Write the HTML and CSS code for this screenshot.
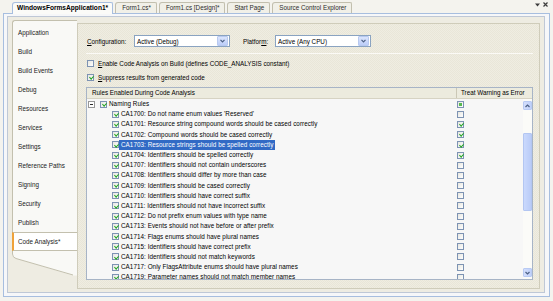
FILE: index.html
```html
<!DOCTYPE html>
<html lang="en">
<head>
    <meta charset="UTF-8">
    <title>WindowsFormsApplication1 - Code Analysis</title>
    <link rel="stylesheet" href="styles.css">
</head>
<body>
    <div class="tabstrip">
        <div class="tab active">WindowsFormsApplication1*</div>
        <div class="tab">Form1.cs*</div>
        <div class="tab">Form1.cs [Design]*</div>
        <div class="tab">Start Page</div>
        <div class="tab">Source Control Explorer</div>
        <div class="tab-tools">
            <svg width="5" height="4" viewBox="0 0 5 4"><path d="M0 0.5H5L2.5 3.5Z" fill="#3c3c3c"/></svg>
            <svg width="5" height="5" viewBox="0 0 5 5"><path d="M0.5 0.5L4.5 4.5M4.5 0.5L0.5 4.5" stroke="#3c3c3c" stroke-width="1.2"/></svg>
        </div>
    </div>

    <div class="doc">
        <div class="doc-inner">
            <div class="nav">
                <div class="nav-list">
                    <div class="nav-item">Application</div>
                    <div class="nav-item">Build</div>
                    <div class="nav-item">Build Events</div>
                    <div class="nav-item">Debug</div>
                    <div class="nav-item">Resources</div>
                    <div class="nav-item">Services</div>
                    <div class="nav-item">Settings</div>
                    <div class="nav-item">Reference Paths</div>
                    <div class="nav-item">Signing</div>
                    <div class="nav-item">Security</div>
                    <div class="nav-item">Publish</div>
                    <div class="nav-item selected">Code Analysis*</div>
                </div>
                <svg class="nav-tail" width="65" height="25" viewBox="0 0 65 25">
                    <path d="M0 0V3Q0 6.5 4 7.5L61 24.5H65V0Z" fill="#f9f9f6"/>
                    <path d="M0.5 0V3Q0.5 6.5 4 7.5L61 24" fill="none" stroke="#c3c0ae"/>
                </svg>
            </div>

            <div class="page">
                <div class="config-row">
                    <span class="label label-config"><u>C</u>onfiguration:</span>
                    <div class="combo">
                        <span class="combo-text">Active (Debug)</span>
                        <span class="combo-btn"><svg width="5" height="4" viewBox="0 0 5 4"><path d="M0.5 0.8L2.5 2.8L4.5 0.8" fill="none" stroke="#4d6185" stroke-width="1.2"/></svg></span>
                    </div>
                    <span class="label label-platform">Platfor<u>m</u>:</span>
                    <div class="combo">
                        <span class="combo-text">Active (Any CPU)</span>
                        <span class="combo-btn"><svg width="5" height="4" viewBox="0 0 5 4"><path d="M0.5 0.8L2.5 2.8L4.5 0.8" fill="none" stroke="#4d6185" stroke-width="1.2"/></svg></span>
                    </div>
                </div>

                <div class="separator"></div>

                <div class="option">
                    <i class="cb"></i>
                    <span><u>E</u>nable Code Analysis on Build (defines CODE_ANALYSIS constant)</span>
                </div>
                <div class="option">
                    <i class="cb on"></i>
                    <span><u>S</u>uppress results from generated code</span>
                </div>

                <div class="rules">
                    <div class="rules-head">
                        <div class="head-name">Rules Enabled During Code Analysis</div>
                        <div class="head-warn">Treat Warning as Error</div>
                    </div>
                    <div class="rules-body">
                        <div class="rows">
                            <div class="row group">
                                <div class="name"><i class="expander"></i><i class="cb on"></i><span class="txt">Naming Rules</span></div>
                                <div class="warn"><i class="cb mixed"></i></div>
                            </div>
                            <div class="row">
                                <div class="name"><i class="cb on"></i><span class="txt">CA1700: Do not name enum values 'Reserved'</span></div>
                                <div class="warn"><i class="cb"></i></div>
                            </div>
                            <div class="row">
                                <div class="name"><i class="cb on"></i><span class="txt">CA1701: Resource string compound words should be cased correctly</span></div>
                                <div class="warn"><i class="cb on"></i></div>
                            </div>
                            <div class="row">
                                <div class="name"><i class="cb on"></i><span class="txt">CA1702: Compound words should be cased correctly</span></div>
                                <div class="warn"><i class="cb on"></i></div>
                            </div>
                            <div class="row">
                                <div class="name"><i class="cb on"></i><span class="txt selected">CA1703: Resource strings should be spelled correctly</span></div>
                                <div class="warn"><i class="cb on"></i></div>
                            </div>
                            <div class="row">
                                <div class="name"><i class="cb on"></i><span class="txt">CA1704: Identifiers should be spelled correctly</span></div>
                                <div class="warn"><i class="cb on"></i></div>
                            </div>
                            <div class="row">
                                <div class="name"><i class="cb on"></i><span class="txt">CA1707: Identifiers should not contain underscores</span></div>
                                <div class="warn"><i class="cb"></i></div>
                            </div>
                            <div class="row">
                                <div class="name"><i class="cb on"></i><span class="txt">CA1708: Identifiers should differ by more than case</span></div>
                                <div class="warn"><i class="cb"></i></div>
                            </div>
                            <div class="row">
                                <div class="name"><i class="cb on"></i><span class="txt">CA1709: Identifiers should be cased correctly</span></div>
                                <div class="warn"><i class="cb"></i></div>
                            </div>
                            <div class="row">
                                <div class="name"><i class="cb on"></i><span class="txt">CA1710: Identifiers should have correct suffix</span></div>
                                <div class="warn"><i class="cb"></i></div>
                            </div>
                            <div class="row">
                                <div class="name"><i class="cb on"></i><span class="txt">CA1711: Identifiers should not have incorrect suffix</span></div>
                                <div class="warn"><i class="cb"></i></div>
                            </div>
                            <div class="row">
                                <div class="name"><i class="cb on"></i><span class="txt">CA1712: Do not prefix enum values with type name</span></div>
                                <div class="warn"><i class="cb"></i></div>
                            </div>
                            <div class="row">
                                <div class="name"><i class="cb on"></i><span class="txt">CA1713: Events should not have before or after prefix</span></div>
                                <div class="warn"><i class="cb"></i></div>
                            </div>
                            <div class="row">
                                <div class="name"><i class="cb on"></i><span class="txt">CA1714: Flags enums should have plural names</span></div>
                                <div class="warn"><i class="cb"></i></div>
                            </div>
                            <div class="row">
                                <div class="name"><i class="cb on"></i><span class="txt">CA1715: Identifiers should have correct prefix</span></div>
                                <div class="warn"><i class="cb"></i></div>
                            </div>
                            <div class="row">
                                <div class="name"><i class="cb on"></i><span class="txt">CA1716: Identifiers should not match keywords</span></div>
                                <div class="warn"><i class="cb"></i></div>
                            </div>
                            <div class="row">
                                <div class="name"><i class="cb on"></i><span class="txt">CA1717: Only FlagsAttribute enums should have plural names</span></div>
                                <div class="warn"><i class="cb"></i></div>
                            </div>
                            <div class="row">
                                <div class="name"><i class="cb on"></i><span class="txt">CA1719: Parameter names should not match member names</span></div>
                                <div class="warn"><i class="cb"></i></div>
                            </div>
                        </div>
                        <div class="vscroll">
                            <div class="sb-btn"><svg width="5" height="4" viewBox="0 0 5 4"><path d="M0.5 3L2.5 1L4.5 3" fill="none" stroke="#4d6185" stroke-width="1.2"/></svg></div>
                            <div class="sb-track"><div class="sb-thumb"></div></div>
                            <div class="sb-btn"><svg width="5" height="4" viewBox="0 0 5 4"><path d="M0.5 1L2.5 3L4.5 1" fill="none" stroke="#4d6185" stroke-width="1.2"/></svg></div>
                        </div>
                    </div>
                </div>
            </div>
        </div>
    </div>
</body>
</html>
```

FILE: styles.css
```css
* {
    box-sizing: border-box;
}
body {
    margin: 0;
    width: 553px;
    height: 301px;
    overflow: hidden;
    background: #f4f3ee;
    font-family: "Liberation Sans", Arial, sans-serif;
    font-size: 6.3px;
    color: #000;
}
u {
    text-decoration: underline;
}

/* document tabs */
.tabstrip {
    display: flex;
    align-items: flex-end;
    height: 13px;
    padding-left: 12px;
}
.tab {
    height: 11px;
    line-height: 10px;
    padding: 0 5px 0 6px;
    margin-right: 2px;
    background: #f1f0e8;
    border: 1px solid #c2bfae;
    border-bottom: none;
    border-radius: 3px 2px 0 0;
    color: #2b2b2b;
    white-space: nowrap;
}
.tab.active {
    position: relative;
    z-index: 1;
    height: 12px;
    margin-bottom: -1px;
    padding: 0 4px 0 4px;
    font-weight: bold;
    font-size: 6.6px;
    background: #fbfbf8;
    border-color: #a7bedf;
    color: #000;
}
.tab-tools {
    display: flex;
    align-items: center;
    gap: 3px;
    margin-left: auto;
    margin-right: 5px;
    align-self: flex-start;
    height: 9px;
}

/* document frame */
.doc {
    margin: 0 3px;
    height: 284px;
    border: 1px solid #a7bedf;
    padding: 2px 4px 3px 3px;
    background: #f6f7f9;
}
.doc-inner {
    display: flex;
    height: 100%;
    border: 1px solid #bfc8d6;
    padding: 3px 4px 3px 4px;
    background: #eeece2;
}

/* project designer navigation */
.nav {
    width: 65px;
    flex-shrink: 0;
}
.nav-list {
    background: #f9f9f6;
    border-left: 1px solid #c3c0ae;
    border-top: 1px solid #c3c0ae;
    border-top-left-radius: 3px;
    padding-top: 2px;
}
.nav-item {
    height: 19px;
    line-height: 19px;
    padding-left: 5px;
    color: #1a1a1a;
    white-space: nowrap;
}
.nav-item.selected {
    margin-left: -1px;
    padding-left: 4px;
    background: #ffffff;
    border-left: 2px solid #efa23a;
    border-top: 1px solid #c3c0ae;
    border-bottom: 1px solid #c3c0ae;
    line-height: 17px;
}
.nav-tail {
    display: block;
}

/* page */
.page {
    flex: 1;
    margin-top: 3px;
    border: 1px solid #cfccba;
    background: repeating-conic-gradient(#efede2 0 25%, #e9e6d8 0 50%) 0 0 / 2px 2px;
    padding: 11px 6px 0 9px;
    display: flex;
    flex-direction: column;
}
.config-row {
    display: flex;
    align-items: center;
    height: 12px;
}
.label {
    white-space: nowrap;
}
.label-config {
    width: 47px;
}
.label-platform {
    width: 32px;
    margin-left: 13px;
}
.combo {
    display: flex;
    align-items: center;
    width: 96px;
    height: 12px;
    background: #fff;
    border: 1px solid #8aa3c1;
    padding: 0 1px 0 2px;
}
.combo-text {
    flex: 1;
    white-space: nowrap;
}
.combo-btn {
    display: flex;
    align-items: center;
    justify-content: center;
    width: 11px;
    height: 10px;
    background: linear-gradient(#dbe5fd, #bccdf8);
    border: 1px solid #b8c9ef;
    border-radius: 1px;
}
.separator {
    height: 1px;
    margin: 6px 0 0 -1px;
    background: #d2cfbd;
    border-bottom: 1px solid #fbfaf6;
}
.option {
    display: flex;
    align-items: center;
    gap: 4px;
    height: 7px;
    margin-top: 6px;
}
.option + .option {
    margin-top: 7px;
}

/* checkboxes */
.cb {
    position: relative;
    display: inline-block;
    flex-shrink: 0;
    width: 7px;
    height: 7px;
    border: 1px solid #7d93b3;
    background: linear-gradient(135deg, #e6e6e0, #ffffff);
}
.cb.on::after {
    content: "";
    position: absolute;
    left: 1.7px;
    top: 0.2px;
    width: 1.6px;
    height: 3.2px;
    border: solid #23a323;
    border-width: 0 1.3px 1.3px 0;
    transform: rotate(45deg);
}
.cb.mixed::after {
    content: "";
    position: absolute;
    left: 1px;
    top: 1px;
    width: 3px;
    height: 3px;
    background: #55b94f;
}

/* rules list */
.rules {
    margin: 6px 0 0 -1px;
    width: 447px;
    height: 193px;
    border: 1px solid #a7b4c6;
    background: #f7f7f7;
    display: flex;
    flex-direction: column;
}
.rules-head {
    display: flex;
    height: 11px;
    line-height: 10px;
    background: #ecebde;
    border-bottom: 1px solid #d6d3c3;
}
.head-name {
    width: 369px;
    padding-left: 5px;
}
.head-warn {
    flex: 1;
    padding-left: 4px;
    border-left: 1px solid #cbc8b6;
    white-space: nowrap;
}
.rules-body {
    flex: 1;
    display: flex;
    min-height: 0;
}
.rows {
    flex: 1;
    overflow: hidden;
}
.row {
    display: flex;
    align-items: center;
    height: 10.2px;
}
.name {
    display: flex;
    align-items: center;
    width: 369px;
    padding-left: 25px;
    white-space: nowrap;
}
.row.group .name {
    padding-left: 1px;
}
.expander {
    position: relative;
    width: 7px;
    height: 7px;
    margin-right: 5px;
    border: 1px solid #989898;
    background: #fff;
}
.expander::after {
    content: "";
    position: absolute;
    left: 1px;
    top: 2px;
    width: 3px;
    height: 1px;
    background: #2b2b2b;
}
.txt {
    line-height: 10px;
    padding: 0 2px;
    letter-spacing: 0.05px;
}
.txt.selected {
    background: #316ac5;
    color: #fff;
}
.warn {
    display: flex;
    align-items: center;
    padding-left: 1px;
}

/* scrollbar */
.vscroll {
    width: 9px;
    display: flex;
    flex-direction: column;
    padding: 2px 0;
    background: #fbfbf8;
}
.sb-btn {
    height: 9px;
    display: flex;
    align-items: center;
    justify-content: center;
    background: linear-gradient(90deg, #d3defc, #bfd0fa);
    border: 1px solid #b8caf3;
    border-radius: 1px;
}
.sb-track {
    flex: 1;
}
.sb-thumb {
    margin-top: 23px;
    height: 78px;
    background: linear-gradient(90deg, #cad9fd, #b9cbf7);
    border: 1px solid #b3c6f2;
    border-radius: 1px;
}
```
